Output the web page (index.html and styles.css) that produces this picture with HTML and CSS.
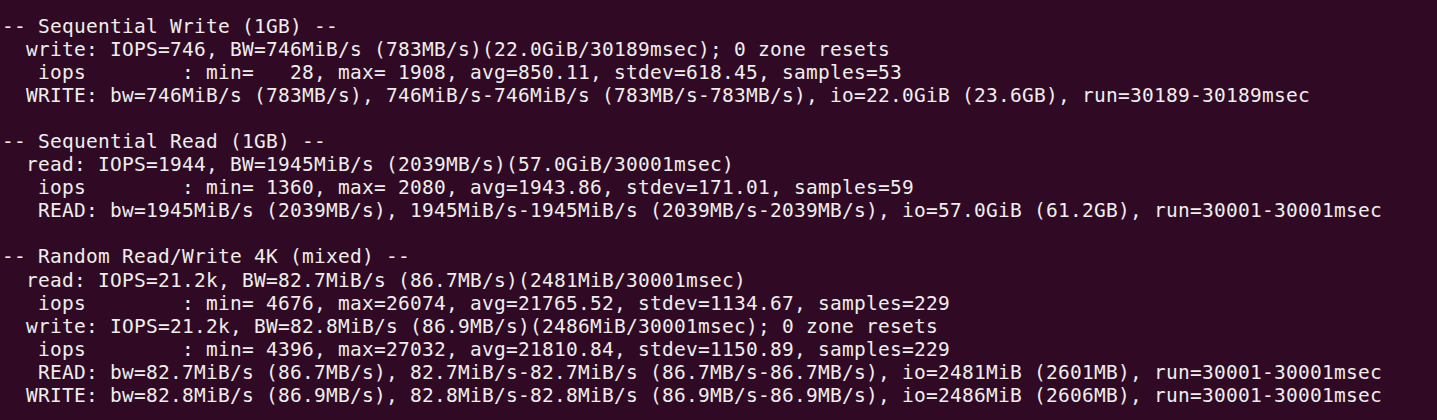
FILE: index.html
```html
<!DOCTYPE html>
<html lang="en">
<head>
<meta charset="utf-8">
<title>fio results</title>
<link rel="stylesheet" href="styles.css">
</head>
<body>
<main class="terminal">
<div class="line">-- Sequential Write (1GB) --</div>
<div class="line">  write: IOPS=746, BW=746MiB/s (783MB/s)(22.0GiB/30189msec); 0 zone resets</div>
<div class="line">   iops        : min=   28, max= 1908, avg=850.11, stdev=618.45, samples=53</div>
<div class="line">  WRITE: bw=746MiB/s (783MB/s), 746MiB/s-746MiB/s (783MB/s-783MB/s), io=22.0GiB (23.6GB), run=30189-30189msec</div>
<div class="line"> </div>
<div class="line">-- Sequential Read (1GB) --</div>
<div class="line">  read: IOPS=1944, BW=1945MiB/s (2039MB/s)(57.0GiB/30001msec)</div>
<div class="line">   iops        : min= 1360, max= 2080, avg=1943.86, stdev=171.01, samples=59</div>
<div class="line">   READ: bw=1945MiB/s (2039MB/s), 1945MiB/s-1945MiB/s (2039MB/s-2039MB/s), io=57.0GiB (61.2GB), run=30001-30001msec</div>
<div class="line"> </div>
<div class="line">-- Random Read/Write 4K (mixed) --</div>
<div class="line">  read: IOPS=21.2k, BW=82.7MiB/s (86.7MB/s)(2481MiB/30001msec)</div>
<div class="line">   iops        : min= 4676, max=26074, avg=21765.52, stdev=1134.67, samples=229</div>
<div class="line">  write: IOPS=21.2k, BW=82.8MiB/s (86.9MB/s)(2486MiB/30001msec); 0 zone resets</div>
<div class="line">   iops        : min= 4396, max=27032, avg=21810.84, stdev=1150.89, samples=229</div>
<div class="line">   READ: bw=82.7MiB/s (86.7MB/s), 82.7MiB/s-82.7MiB/s (86.7MB/s-86.7MB/s), io=2481MiB (2601MB), run=30001-30001msec</div>
<div class="line">  WRITE: bw=82.8MiB/s (86.9MB/s), 82.8MiB/s-82.8MiB/s (86.9MB/s-86.9MB/s), io=2486MiB (2606MB), run=30001-30001msec</div>
</main>
</body>
</html>
```
FILE: styles.css
```css
html, body {
  margin: 0;
  padding: 0;
  background: #300a24;
  height: 100%;
  overflow: hidden;
}

.terminal {
  display: flex;
  flex-direction: column;
  padding: 14.7px 0 0 2px;
  color: #eeeeec;
  font-family: "DejaVu Sans Mono", "Liberation Mono", monospace;
  font-size: 19.5px;
  letter-spacing: 0.26px;
  line-height: 23.08px;
}

.line {
  white-space: pre;
  height: 23.08px;
}
```
